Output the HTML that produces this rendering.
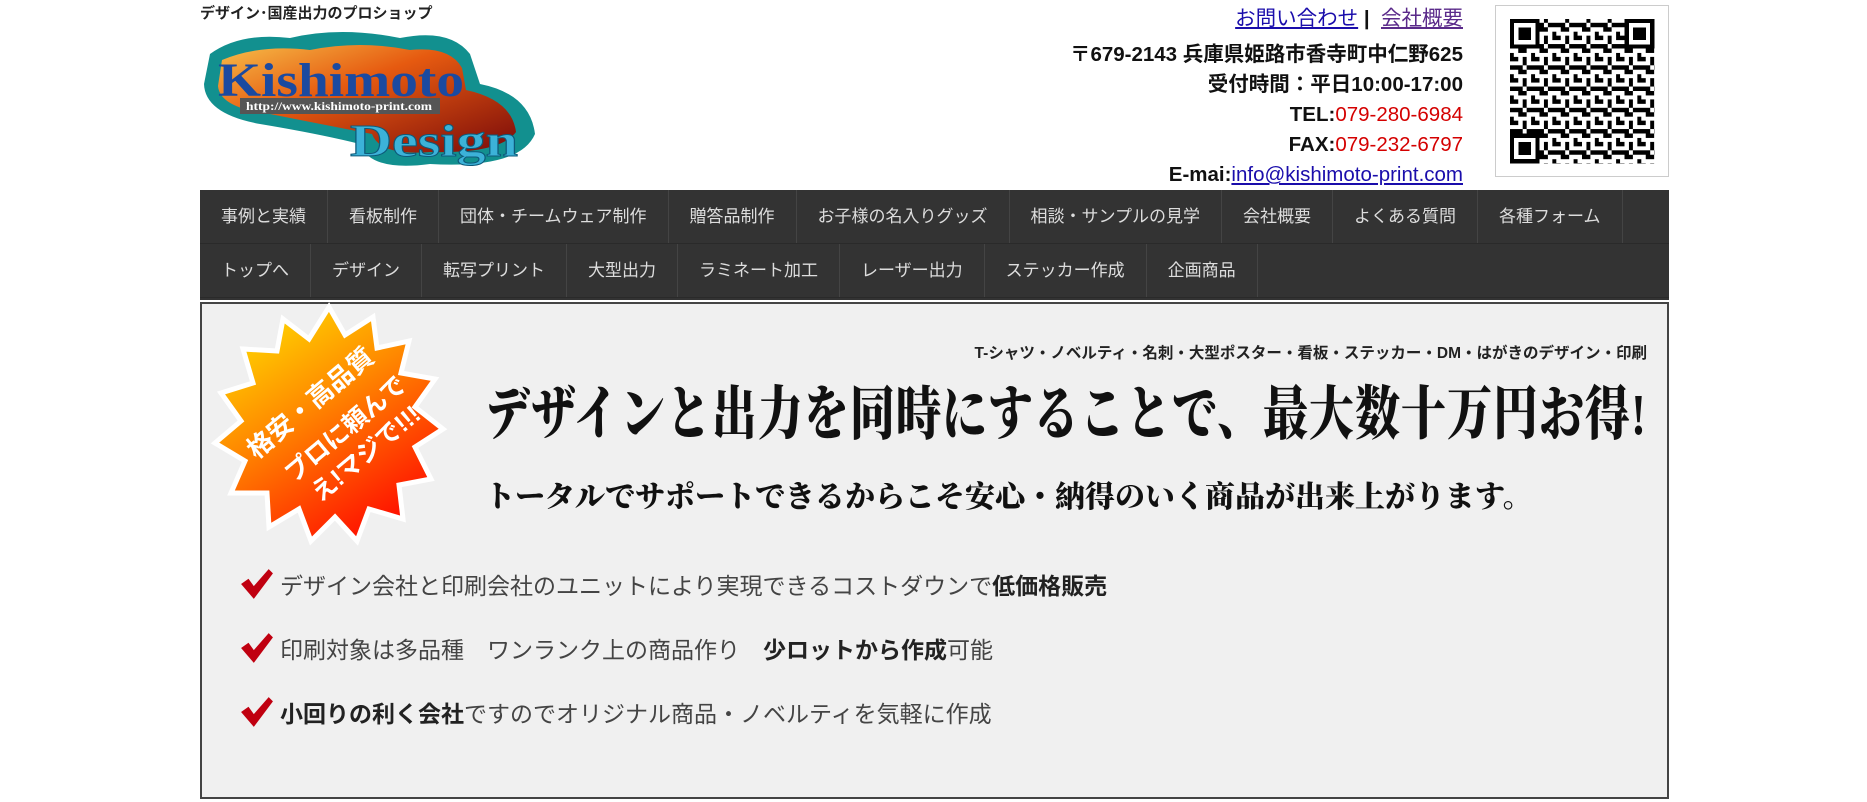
<!DOCTYPE html>
<html><head><meta charset="utf-8">
<style>
*{margin:0;padding:0;box-sizing:border-box}
body{width:1867px;height:802px;background:#fff;font-family:"Liberation Sans","Noto Sans CJK JP",sans-serif;position:relative;overflow:hidden}
.abs{position:absolute}
.tag{left:200px;top:2px;font-size:15px;font-weight:bold;color:#222}
.info{right:404px;top:4px;text-align:right;font-weight:bold;font-size:20.5px;color:#111;line-height:30px}
.info a{color:#1a0dab;font-weight:normal;text-decoration:underline}
.info .r{color:#d40000;font-weight:normal}
.qr{left:1495px;top:5px;width:174px;height:172px;border:1px solid #ccc;background:#fff}
.nav{left:200px;top:190px;width:1469px;height:110px;background:#333}
.row{height:54px;display:flex;border-bottom:1px solid #2a2a2a}
.row span{display:block;padding:0 21px;line-height:54px;font-size:17px;color:#ddd;border-right:1px solid #444}
.ban{left:200px;top:302px;width:1469px;height:497px;background:#f0f0f0;border:2px solid #444}
.sub{right:20px;top:37px;font-size:15.5px;font-weight:bold;color:#222}
.h1{left:283px;top:72px;font-size:45px;font-weight:900;color:#111;font-family:"Liberation Serif","Noto Serif CJK SC",serif;letter-spacing:1px;white-space:nowrap;transform:scaleY(1.3);transform-origin:0 50%}
.h2{left:283px;top:168px;font-size:30px;font-weight:900;color:#111;font-family:"Liberation Serif","Noto Serif CJK SC",serif;white-space:nowrap}
.li{left:38px;font-size:23px;color:#444;white-space:nowrap}
.li b{color:#222}
.li svg{position:absolute;left:0;top:1px}
.li span{margin-left:40px}
</style></head><body>
<div class="abs tag">デザイン･国産出力のプロショップ</div>
<svg class="abs" style="left:200px;top:24px" width="340" height="148" viewBox="0 0 340 148">
<defs><linearGradient id="lg" x1="0" y1="0" x2="1" y2="1"><stop offset="0" stop-color="#f7c04a"/><stop offset=".4" stop-color="#e65a10"/><stop offset="1" stop-color="#7a0a0a"/></linearGradient></defs>
<path d="M10 30 Q40 8 90 14 Q140 2 200 14 Q250 4 270 30 L280 60 Q330 70 335 110 Q320 145 230 140 Q170 148 160 120 Q120 110 60 100 Q5 90 4 60 Z" fill="#12908f"/>
<path d="M22 36 Q60 20 110 26 Q160 16 210 26 Q250 22 262 44 L266 66 Q312 76 316 108 Q300 130 230 128 Q180 132 172 110 Q120 100 70 90 Q20 84 18 62 Z" fill="url(#lg)"/>
<text x="18" y="72" font-family="Liberation Serif,serif" font-weight="bold" font-size="48" fill="#1b4aa0" textLength="246" lengthAdjust="spacingAndGlyphs">Kishimoto</text>
<rect x="40" y="74" width="200" height="16" fill="#555"/>
<text x="46" y="86" font-family="Liberation Serif,serif" font-weight="bold" font-size="12" fill="#fff" textLength="186" lengthAdjust="spacingAndGlyphs">http://www.kishimoto-print.com</text>
<text x="150" y="132" font-family="Liberation Serif,serif" font-weight="bold" font-size="46" fill="#3cb2d8" stroke="#0d5a7a" stroke-width="1" textLength="168" lengthAdjust="spacingAndGlyphs">Design</text>
</svg>
<div class="abs info">
<div style="margin-bottom:6px"><a>お問い合わせ</a> <span style="font-weight:bold">|</span>&nbsp; <a style="color:#5a2a8a">会社概要</a></div>
<div>〒679-2143 兵庫県姫路市香寺町中仁野625</div>
<div>受付時間：平日10:00-17:00</div>
<div>TEL:<span class="r">079-280-6984</span></div>
<div>FAX:<span class="r">079-232-6797</span></div>
<div>E-mai:<a>info@kishimoto-print.com</a></div>
</div>
<div class="abs qr">
<svg width="172" height="170" viewBox="0 0 40 40" shape-rendering="crispEdges">
<defs><pattern id="p" width="5" height="5" patternUnits="userSpaceOnUse"><rect width="5" height="5" fill="#fff"/><rect x="0" y="0" width="2" height="1" fill="#000"/><rect x="3" y="1" width="1" height="2" fill="#000"/><rect x="1" y="2" width="1" height="2" fill="#000"/><rect x="2" y="4" width="3" height="1" fill="#000"/><rect x="4" y="2" width="1" height="1" fill="#000"/><rect x="0" y="4" width="1" height="1" fill="#000"/></pattern></defs>
<rect x="3" y="3" width="34" height="34" fill="url(#p)"/>
<g fill="#000"><rect x="3" y="3" width="7" height="7"/><rect x="30" y="3" width="7" height="7"/><rect x="3" y="30" width="7" height="7"/></g>
<g fill="#fff"><rect x="4" y="4" width="5" height="5"/><rect x="31" y="4" width="5" height="5"/><rect x="4" y="31" width="5" height="5"/></g>
<g fill="#000"><rect x="5" y="5" width="3" height="3"/><rect x="32" y="5" width="3" height="3"/><rect x="5" y="32" width="3" height="3"/></g>
</svg></div>
<div class="abs nav">
<div class="row"><span>事例と実績</span><span>看板制作</span><span>団体・チームウェア制作</span><span>贈答品制作</span><span>お子様の名入りグッズ</span><span>相談・サンプルの見学</span><span>会社概要</span><span>よくある質問</span><span>各種フォーム</span></div>
<div class="row"><span>トップへ</span><span>デザイン</span><span>転写プリント</span><span>大型出力</span><span>ラミネート加工</span><span>レーザー出力</span><span>ステッカー作成</span><span>企画商品</span></div>
</div>
<div class="abs ban">
<svg class="abs" style="left:2px;top:-4px" width="250" height="250" viewBox="-125 -125 250 250">
<defs><linearGradient id="sg" x1="0" y1="0" x2="0.6" y2="1"><stop offset="0" stop-color="#ffee00"/><stop offset=".5" stop-color="#ff8800"/><stop offset="1" stop-color="#ff1500"/></linearGradient></defs>
<polygon fill="url(#sg)" stroke="#fff" stroke-width="5" points="0,-118 16,-90 44,-108 48,-77 80,-84 72,-52 106,-46 86,-18 114,4 86,22 102,54 70,60 74,94 40,84 28,116 6,92 -18,116 -30,84 -60,102 -62,68 -98,68 -84,36 -114,18 -88,-4 -108,-32 -76,-42 -86,-76 -52,-74 -46,-106 -20,-86"/>
<g transform="rotate(-40)" fill="#fff" font-weight="bold" font-family="Liberation Sans,Noto Sans CJK JP,sans-serif" text-anchor="middle">
<text x="0" y="-20" font-size="26">格安・高品質</text>
<text x="10" y="22" font-size="25">プロに頼んで</text>
<text x="10" y="54" font-size="25">え!マジで!!!</text>
</g></svg>
<div class="abs sub">T-シャツ・ノベルティ・名刺・大型ポスター・看板・ステッカー・DM・はがきのデザイン・印刷</div>
<div class="abs h1">デザインと出力を同時にすることで、最大数十万円お得!</div>
<div class="abs h2">トータルでサポートできるからこそ安心・納得のいく商品が出来上がります。</div>
<div class="abs li" style="top:263px"><svg width="34" height="32" viewBox="0 0 32 30"><path d="M1 15 L8 10 L13 17 L27 1 L31 5 L13 29 Z" fill="#c00010"/></svg><span>デザイン会社と印刷会社のユニットにより実現できるコストダウンで<b>低価格販売</b></span></div>
<div class="abs li" style="top:327px"><svg width="34" height="32" viewBox="0 0 32 30"><path d="M1 15 L8 10 L13 17 L27 1 L31 5 L13 29 Z" fill="#c00010"/></svg><span>印刷対象は多品種　ワンランク上の商品作り　<b>少ロットから作成</b>可能</span></div>
<div class="abs li" style="top:391px"><svg width="34" height="32" viewBox="0 0 32 30"><path d="M1 15 L8 10 L13 17 L27 1 L31 5 L13 29 Z" fill="#c00010"/></svg><span><b>小回りの利く会社</b>ですのでオリジナル商品・ノベルティを気軽に作成</span></div>
</div>
</body></html>
